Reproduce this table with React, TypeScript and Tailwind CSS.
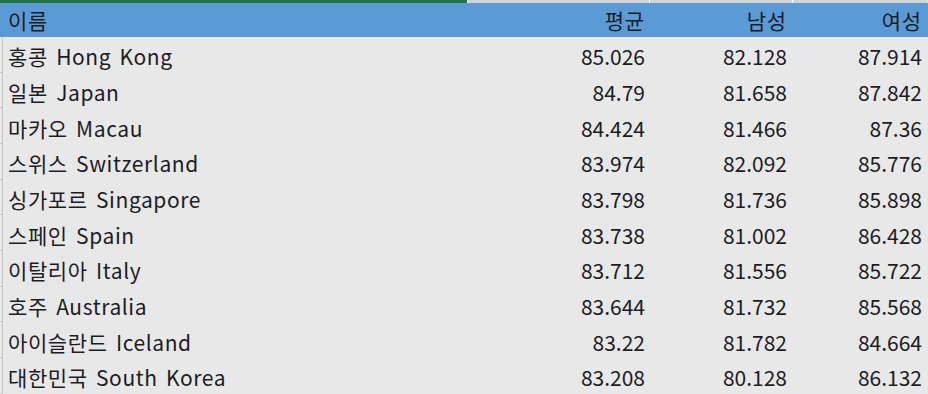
const rows = [
  ["홍콩 Hong Kong", "85.026", "82.128", "87.914"],
  ["일본 Japan", "84.79", "81.658", "87.842"],
  ["마카오 Macau", "84.424", "81.466", "87.36"],
  ["스위스 Switzerland", "83.974", "82.092", "85.776"],
  ["싱가포르 Singapore", "83.798", "81.736", "85.898"],
  ["스페인 Spain", "83.738", "81.002", "86.428"],
  ["이탈리아 Italy", "83.712", "81.556", "85.722"],
  ["호주 Australia", "83.644", "81.732", "85.568"],
  ["아이슬란드 Iceland", "83.22", "81.782", "84.664"],
  ["대한민국 South Korea", "83.208", "80.128", "86.132"],
]

const cols = "grid grid-cols-[467px_182px_143px_135px]"

export default function App() {
  return (
    <div
      className="w-[928px] h-[394px] overflow-hidden bg-[#e8e8e8] text-[#1c1c24] text-[21px] leading-none"
      style={{ fontFamily: '"Noto Sans CJK KR", "Noto Sans", sans-serif' }}
    >
      {/* column header strip */}
      <div className={`${cols} h-[3px]`}>
        <div className="bg-[#217346]" />
        <div className="bg-[#d4d4d4] border-l border-white" />
        <div className="bg-[#d4d4d4] border-l border-white" />
        <div className="bg-[#d4d4d4] border-l border-white" />
      </div>

      {/* header */}
      <div className={`${cols} h-[34px] bg-[#5b9bd5] items-center`}>
        <div className="pl-[8px] tracking-[0.8px]">이름</div>
        <div className="text-right pr-[4px] tracking-[0.8px]">평균</div>
        <div className="text-right pr-[5px] tracking-[0.8px]">남성</div>
        <div className="text-right pr-[5px] tracking-[0.8px]">여성</div>
      </div>

      {/* body */}
      <div className="flex flex-col">
        {rows.map((r) => (
          <div key={r[0]} className="relative h-[35.67px]">
            <div className="absolute left-0 top-0 h-full w-[3px] border-r border-[#c4c4c4] border-b" />
            <div className={`${cols} h-full items-center pt-[4px]`}>
              <div className="pl-[8px] whitespace-nowrap tracking-[0.6px] [word-spacing:3px]">{r[0]}</div>
              <div className="text-right pr-[4px]">{r[1]}</div>
              <div className="text-right pr-[5px]">{r[2]}</div>
              <div className="text-right pr-[5px]">{r[3]}</div>
            </div>
          </div>
        ))}
      </div>
    </div>
  )
}
